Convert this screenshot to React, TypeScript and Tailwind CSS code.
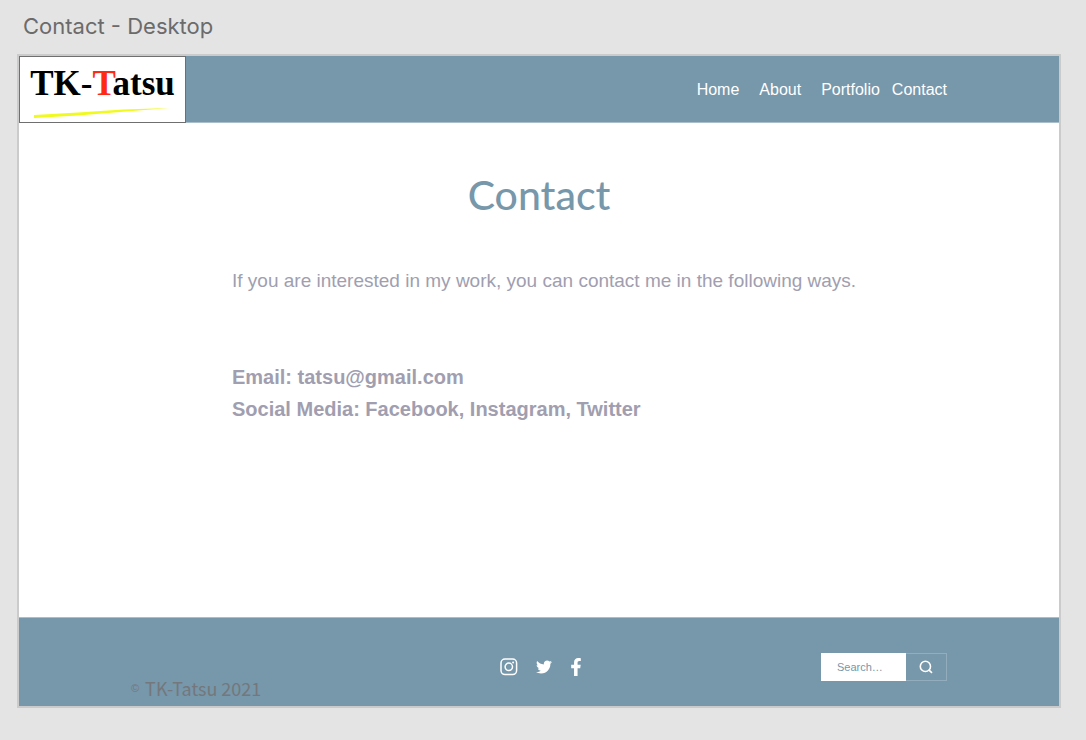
import React from "react";
import { FaFacebookF, FaTwitter } from "react-icons/fa";

function Logo() {
  return (
    <a
      href="#home"
      aria-label="TK-Tatsu"
      className="relative flex h-[67px] w-[167px] items-center justify-center border border-[#6f6f6f] bg-white pb-3 font-['Liberation_Serif',serif] text-[35px] leading-none font-bold text-black"
    >
      <span>
        TK-<span className="text-[#ff2a12]">T</span>atsu
      </span>
      <svg
        className="absolute bottom-[3px] left-[13px]"
        width="140"
        height="12"
        viewBox="0 0 140 12"
        aria-hidden="true"
      >
        <path d="M1 8 L45 5.6 L90 2.6 L137 1 L90 4.8 L45 8.6 L1 11 Z" fill="#f0fa1e" />
      </svg>
    </a>
  );
}

function InstagramIcon() {
  return (
    <svg width="18" height="18" viewBox="0 0 18 18" fill="none" stroke="currentColor" aria-hidden="true">
      <rect x="1" y="1" width="15.6" height="15.6" rx="4" strokeWidth="1.5" />
      <circle cx="8.8" cy="8.8" r="3.7" strokeWidth="1.5" />
      <circle cx="13.1" cy="4.6" r="1" fill="currentColor" stroke="none" />
    </svg>
  );
}

function SearchIcon() {
  return (
    <svg width="14" height="14" viewBox="0 0 14 14" fill="none" stroke="currentColor" strokeWidth="1.6" aria-hidden="true">
      <circle cx="6.4" cy="6.4" r="5.1" />
      <path d="M9.8 9.8 L13 12.8" />
    </svg>
  );
}

export default function App() {
  return (
    <div className="flex min-h-screen flex-col bg-[#e4e4e4] px-[17px] pb-8 font-['Liberation_Sans',Arial,sans-serif]">
      <div className="flex h-[54px] items-center pb-0.5 pl-1.5 font-['Inter',sans-serif] text-[22px] text-[#6b6b6b]">
        Contact - Desktop
      </div>
      <div className="mr-2 flex flex-1 flex-col border-2 border-[#cbcbcb] bg-white">
        <header className="flex h-[67px] items-center justify-between border-b border-[#a9bfcb] bg-[#7797ab] pr-28">
          <Logo />
          <nav className="flex pt-0.5 text-base text-white">
            <a href="#home">Home</a>
            <a href="#about" className="ml-5">About</a>
            <a href="#portfolio" className="ml-5">Portfolio</a>
            <a href="#contact" className="ml-3">Contact</a>
          </nav>
        </header>

        <main className="flex-1">
          <h1 className="pt-[46px] text-center font-['Comic_Sans_MS','Lato',sans-serif] text-[41px] leading-[52px] font-medium text-[#7797ab]">
            Contact
          </h1>
          <div className="pl-[213px] text-[#a09eaf]">
            <p className="mt-11 text-[19px] leading-8">
              If you are interested in my work, you can contact me in the following ways.
            </p>
            <div className="mt-16 text-[20px] leading-8 font-bold">
              <p>Email: tatsu@gmail.com</p>
              <p>Social Media: Facebook, Instagram, Twitter</p>
            </div>
          </div>
        </main>

        <footer className="grid h-[89px] grid-cols-[1fr_auto_1fr] items-center border-t border-[#a9bfcb] bg-[#7797ab] px-28 pt-2.5">
          <p className="mt-[42px] flex items-center gap-1.5 text-[18px] text-[#74777b]">
            <span className="text-[11px]">©</span>
            <span className="font-['Noto_Sans_CJK_JP',sans-serif] leading-6">TK-Tatsu 2021</span>
          </p>
          <div className="flex items-center gap-[18px] pl-1 text-white">
            <a href="#instagram" aria-label="Instagram"><InstagramIcon /></a>
            <a href="#twitter" aria-label="Twitter"><FaTwitter className="size-4" /></a>
            <a href="#facebook" aria-label="Facebook"><FaFacebookF className="h-[18px] w-3" /></a>
          </div>
          <form className="flex h-7 justify-self-end" onSubmit={(e) => e.preventDefault()}>
            <input
              type="text"
              aria-label="Search"
              placeholder="Search…"
              className="w-[85px] bg-white pl-4 text-[11px] text-[#7797ab] outline-none placeholder:text-[#7797ab]"
            />
            <button
              type="submit"
              aria-label="Submit search"
              className="flex w-[41px] items-center justify-center border border-l-0 border-[#93adbc] text-white"
            >
              <SearchIcon />
            </button>
          </form>
        </footer>
      </div>
    </div>
  );
}
